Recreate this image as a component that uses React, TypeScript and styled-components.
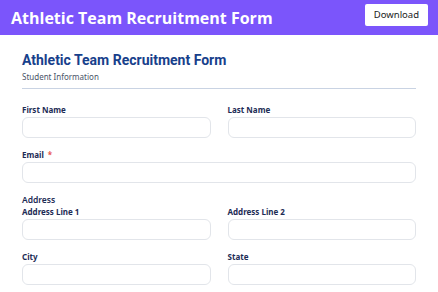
import styled, {createGlobalStyle} from "styled-components";

const GlobalStyle = createGlobalStyle`
  body {
    margin: 0;
    background: #ffffff;
    font-family: "Noto Sans", "Open Sans", sans-serif;
  }
`

const Header = styled.header`
  display: flex;
  align-items: center;
  justify-content: space-between;
  height: 35px;
  padding: 0 10px 0 11px;
  background-color: #7b55fb;
`

const HeaderTitle = styled.h1`
  margin: 0;
  color: #ffffff;
  font-family: "Open Sans", sans-serif;
  font-size: 16px;
  font-weight: 700;
`

const DownloadButton = styled.button`
  height: 22px;
  padding: 0 9px;
  margin-top: -6px;
  background: #ffffff;
  border: none;
  border-radius: 2px;
  color: #222;
  font-family: "Noto Sans", sans-serif;
  font-size: 9.5px;
`

const Form = styled.form`
  padding: 16px 22px 0;
`

const Title = styled.h2`
  margin: 0;
  color: #17408b;
  font-family: Roboto, "Noto Sans", sans-serif;
  font-size: 14px;
  font-weight: 700;
  line-height: 18px;
`

const Subtitle = styled.p`
  margin: 2px 0 0;
  padding-bottom: 5px;
  border-bottom: 1px solid #c9d3e3;
  color: #4a5468;
  font-size: 8px;
  line-height: 12px;
`

const Row = styled.div<{ $cols?: number; $gap?: number }>`
  display: grid;
  grid-template-columns: repeat(${(p) => p.$cols ?? 2}, 1fr);
  column-gap: 17px;
  margin-top: ${(p) => p.$gap ?? 12}px;
`

const Field = styled.div`
  display: flex;
  flex-direction: column;
`

const Label = styled.label`
  color: #1d2c55;
  font-size: 8px;
  font-weight: 700;
  line-height: 10px;
  margin-bottom: 2px;
`

const Required = styled.span`
  color: #e8544f;
  margin-left: 4px;
`

const Input = styled.input`
  box-sizing: border-box;
  height: 21px;
  width: 100%;
  border: 1px solid #e2e5ea;
  border-radius: 6px;
  background: #ffffff;
`

const GroupLabel = styled.div`
  margin-top: 11px;
  color: #1d2c55;
  font-size: 8.5px;
  font-weight: 600;
  line-height: 11px;
`

export default function App() {
    return (
        <>
            <GlobalStyle/>
            <Header>
                <HeaderTitle>Athletic Team Recruitment Form</HeaderTitle>
                <DownloadButton type="button">Download</DownloadButton>
            </Header>
            <Form>
                <Title>Athletic Team Recruitment Form</Title>
                <Subtitle>Student Information</Subtitle>
                <Row $gap={16}>
                    <Field>
                        <Label>First Name</Label>
                        <Input/>
                    </Field>
                    <Field>
                        <Label>Last Name</Label>
                        <Input/>
                    </Field>
                </Row>
                <Row $cols={1}>
                    <Field>
                        <Label>Email<Required>*</Required></Label>
                        <Input/>
                    </Field>
                </Row>
                <GroupLabel>Address</GroupLabel>
                <Row $gap={2}>
                    <Field>
                        <Label>Address Line 1</Label>
                        <Input/>
                    </Field>
                    <Field>
                        <Label>Address Line 2</Label>
                        <Input/>
                    </Field>
                </Row>
                <Row>
                    <Field>
                        <Label>City</Label>
                        <Input/>
                    </Field>
                    <Field>
                        <Label>State</Label>
                        <Input/>
                    </Field>
                </Row>
            </Form>
        </>
    )
}
